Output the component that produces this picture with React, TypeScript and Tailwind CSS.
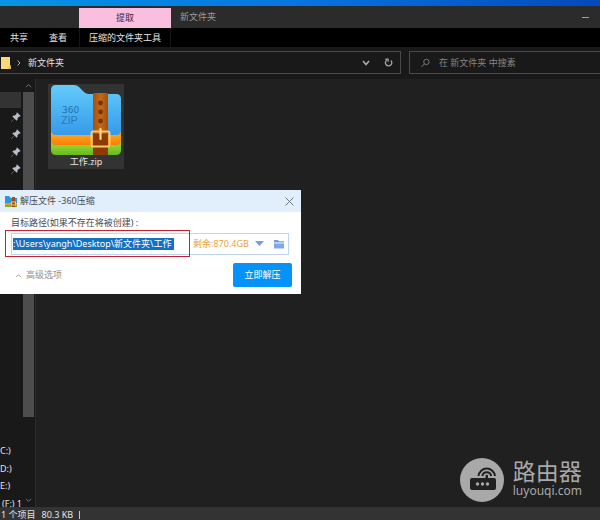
import React from "react";

const PINS = ["desktop", "downloads", "documents", "pictures"];
const DRIVES = ["C:)", "D:)", "E:)", "= (F:) 1"];

function PinIcon() {
  return (
    <svg className="h-[10px] w-[10px]" viewBox="0 0 16 16" aria-hidden="true">
      <path d="M9.5 0.5 L15.5 6.5 L13.6 7.4 L13 7.2 L10.4 9.8 L10.4 12.4 L9 13.8 L5.6 10.4 L1 15.6 L0.4 15 L5.4 10.3 L2.2 7 L3.6 5.6 L6.2 5.6 L8.8 3 L8.6 2.4 Z" fill="#b4bfcb" />
    </svg>
  );
}

function Chevron({ className, d }: { className: string; d: string }) {
  return (
    <svg className={className} viewBox="0 0 8 6" fill="none" stroke="currentColor" aria-hidden="true">
      <path d={d} />
    </svg>
  );
}

function ZipIcon() {
  return (
    <svg className="block h-[72px] w-[72px]" viewBox="0 0 72 72" aria-hidden="true">
      <defs>
        <linearGradient id="folder" x1="0" y1="0" x2="0" y2="1">
          <stop offset="0" stopColor="#63ccfa" />
          <stop offset="1" stopColor="#369aea" />
        </linearGradient>
        <linearGradient id="orange" x1="0" y1="0" x2="0" y2="1">
          <stop offset="0.5" stopColor="#ffa21a" />
          <stop offset="1" stopColor="#f97c08" />
        </linearGradient>
        <linearGradient id="green" x1="0" y1="0" x2="0" y2="1">
          <stop offset="0.6" stopColor="#8ed32c" />
          <stop offset="1" stopColor="#65bb1d" />
        </linearGradient>
        <linearGradient id="belt" x1="0" y1="0" x2="1" y2="0">
          <stop offset="0" stopColor="#a94f08" />
          <stop offset="0.5" stopColor="#c46a17" />
          <stop offset="1" stopColor="#a84c06" />
        </linearGradient>
      </defs>
      <path d="M1 48 H71 V66 Q71 71 66 71 H6 Q1 71 1 66 Z" fill="url(#green)" />
      <path d="M1 42 H71 V56 Q71 61 66 61 H6 Q1 61 1 56 Z" fill="url(#orange)" />
      <path d="M1 6 Q1 1 6 1 H24 Q27 1 29 3 L34 8 Q36 10 39 10 H66 Q71 10 71 15 V46 Q71 51 66 51 H6 Q1 51 1 46 Z" fill="url(#folder)" />
      <text x="12" y="29" fill="#236fae" fontSize="9" fontFamily="'DejaVu Sans', sans-serif">360</text>
      <text x="11" y="40" fill="#2c7abb" fontSize="11" fontFamily="Roboto, sans-serif">ZIP</text>
      <rect x="43" y="9" width="15" height="62" rx="1" fill="url(#belt)" />
      <rect x="43" y="50" width="15" height="21" fill="#8d3b04" />
      <circle cx="50.5" cy="19" r="2.4" fill="#743203" />
      <circle cx="50.5" cy="28" r="2.4" fill="#743203" />
      <circle cx="50.5" cy="37" r="2.4" fill="#743203" />
      <rect x="41.5" y="47.5" width="18" height="15" rx="1.5" fill="none" stroke="#fcc96a" strokeWidth="2" />
      <path d="M50.5 45 V55" stroke="#ffd681" strokeWidth="2.2" strokeLinecap="round" />
    </svg>
  );
}

function SmallZipIcon() {
  return (
    <svg className="h-3 w-3" viewBox="0 0 12 12" aria-hidden="true">
      <path d="M0 1 H4 L6 3 H12 V8 H0 Z" fill="#2f95dc" />
      <path d="M0 8 H12 V10 H0 Z" fill="#f39a1e" />
      <path d="M0 10 H12 V12 H0 Z" fill="#6fb52a" />
      <path d="M7 2 H10 V12 H7 Z" fill="#99501a" />
      <rect x="6.5" y="7" width="4" height="3" fill="none" stroke="#f8c968" />
    </svg>
  );
}

function ExtractDialog() {
  return (
    <section role="dialog" aria-labelledby="dialog-title" className="absolute left-0 top-[190px] w-[301px] bg-white pb-[7px] text-[#4a4a4a]">
      <header className="flex h-[22px] items-center bg-[#e1eefc] pl-[5px] pr-[7px]">
        <SmallZipIcon />
        <h1 id="dialog-title" className="ml-[3px] text-[9px]">解压文件 -360压缩</h1>
        <button type="button" aria-label="关闭" className="ml-auto">
          <svg className="h-[9px] w-[9px]" viewBox="0 0 9 9" stroke="#6f7780" aria-hidden="true">
            <path d="M0.5 0.5 L8.5 8.5 M8.5 0.5 L0.5 8.5" />
          </svg>
        </button>
      </header>
      <label htmlFor="target" className="block px-[11px] pt-1 text-[9px] leading-[14px]">目标路径(如果不存在将被创建) :</label>
      <div className="flex h-[27px] items-center pl-[5px] pr-3">
        <div className="flex h-[27px] w-[185px] shrink-0 items-center border border-[#c4202e] pl-[5px]">
          <div className="flex h-[22px] w-full items-center border-y border-l border-[#bfd5f2] pl-px">
            <input id="target" defaultValue=":\Users\yangh\Desktop\新文件夹\工作" className="h-3 w-[161px] bg-[#1271c4] text-[9px] leading-3 text-white outline-none" />
          </div>
        </div>
        <div className="flex h-[22px] flex-1 items-center border-y border-r border-[#bfd5f2] pl-[3px] pr-1">
          <span className="whitespace-nowrap text-[9px] text-[#e8a33b]">剩余:870.4GB</span>
          <button type="button" aria-label="选择路径" className="ml-auto">
            <svg className="h-[5px] w-[9px]" viewBox="0 0 9 5" aria-hidden="true"><path d="M0 0 H9 L4.5 5 Z" fill="#6d9fe6" /></svg>
          </button>
          <button type="button" aria-label="浏览文件夹" className="ml-[10px]">
            <svg className="h-[10px] w-[10px]" viewBox="0 0 10 10" aria-hidden="true">
              <path d="M0 1 H4 L5 2.2 H10 V3.6 H0 Z" fill="#6f9fdf" />
              <path d="M0 4.4 H10 V9.5 H0 Z" fill="#7fa9e4" />
            </svg>
          </button>
        </div>
      </div>
      <div className="mt-[6px] flex h-6 items-center justify-between pl-[15px] pr-[9px]">
        <button type="button" className="flex items-center gap-1 text-[9px] text-[#8f8f8f]">
          <Chevron className="h-[5px] w-[7px]" d="M1 5 L4 2 L7 5" />
          高级选项
        </button>
        <button type="button" className="h-6 w-[59px] rounded-[2px] bg-[#0593fb] text-[9px] text-white">立即解压</button>
      </div>
    </section>
  );
}

function Watermark() {
  return (
    <div className="absolute bottom-[18px] right-[18px] flex items-center gap-[9px] text-[#a9a9a9]">
      <svg className="h-11 w-11" viewBox="0 0 44 44" aria-hidden="true">
        <circle cx="22" cy="22" r="22" fill="#a9a9a9" />
        <rect x="10" y="20" width="26" height="12" rx="2" fill="#212121" />
        <g fill="#a9a9a9">
          <circle cx="17.5" cy="26" r="1.7" />
          <circle cx="22.5" cy="26" r="1.7" />
          <circle cx="27.5" cy="26" r="1.7" />
        </g>
        <g fill="none" stroke="#212121" strokeWidth="2">
          <path d="M18.5 18 A8.3 8.3 0 0 1 35 18" />
          <path d="M22.3 18 A4.5 4.5 0 0 1 31.2 18" />
        </g>
        <path d="M25.5 21 V18 A1.2 1.2 0 0 1 28 18 V21 Z" fill="#212121" />
      </svg>
      <div className="pb-1">
        <div className="text-[23px] leading-[26px]">路由器</div>
        <div className="text-[12px] leading-[14px]">luyouqi.com</div>
      </div>
    </div>
  );
}

export default function App() {
  return (
    <main className="relative flex min-h-screen flex-col overflow-hidden bg-[#191919] font-['Noto_Sans','Noto_Sans_CJK_SC',sans-serif] text-[9px] text-[#e4e4e4]">
      <div className="h-[6px] bg-linear-to-r from-[#0994e4] via-[#0874e2] to-[#0549bd]" />

      <header className="grid grid-cols-[79px_92px_1fr] bg-[#2b2b2b]">
        <div />
        <button type="button" className="mt-[2px] h-5 bg-[#fabfde] text-[#3a2531]">提取</button>
        <div className="flex h-[22px] items-center justify-between pl-[9px] pr-[11px] text-[#9c9c9c]">
          <span>新文件夹</span>
          <button type="button" aria-label="最小化" className="flex h-3 items-center"><span className="h-px w-[7px] bg-[#a0a0a0]" /></button>
        </div>
      </header>

      <nav className="grid h-[19px] grid-cols-[79px_92px_1fr] bg-black">
        <div className="flex items-center gap-[21px] pl-[10px]">
          <button type="button">共享</button>
          <button type="button">查看</button>
        </div>
        <button type="button" className="border-x border-[#171717] whitespace-nowrap">压缩的文件夹工具</button>
      </nav>

      <div className="flex h-8 items-start gap-2 pt-1">
        <div className="flex h-[23px] w-[401px] items-center border-y border-r border-[#4a4a4a] pl-px pr-[7px]">
          <svg className="h-3 w-[10px]" viewBox="0 0 10 12" aria-hidden="true">
            <path d="M0 0 H9 V8 L10 9 V12 H0 Z" fill="#fbd976" />
            <path d="M8 9 H10 V12 H7 Z" fill="#e9bd51" />
          </svg>
          <svg className="ml-[6px] h-[6px] w-1" viewBox="0 0 4 6" fill="none" stroke="#b5b5b5" aria-hidden="true"><path d="M0.5 0.5 L3 3 L0.5 5.5" /></svg>
          <button type="button" className="ml-[7px]">新文件夹</button>
          <button type="button" aria-label="历史记录" className="ml-auto text-[#b0b0b0]">
            <Chevron className="h-[6px] w-2 stroke-[1.5]" d="M1 1 L4 4.5 L7 1" />
          </button>
          <button type="button" aria-label="刷新" className="ml-[14px]">
            <svg className="h-[9px] w-[9px]" viewBox="0 0 9 9" fill="none" stroke="#a0a0a0" strokeWidth="1.4" aria-hidden="true">
              <path d="M6.8 2.4 A3.2 3.2 0 1 1 2.6 2.2 M1.4 1.2 H4 V3.8" />
            </svg>
          </button>
        </div>
        <label className="flex h-[23px] flex-1 items-center border-y border-l border-[#4a4a4a] pl-[11px]">
          <svg className="h-[10px] w-[10px]" viewBox="0 0 10 10" fill="none" stroke="#808080" aria-hidden="true">
            <circle cx="6" cy="3.8" r="3" />
            <path d="M3.8 6 L0.5 9.4" />
          </svg>
          <input type="search" aria-label="搜索" placeholder="在 新文件夹 中搜素" className="ml-[9px] w-full bg-transparent text-[9px] outline-none placeholder:text-[#858585]" />
        </label>
      </div>

      <div className="flex flex-1">
        <aside className="flex w-[22px] flex-col overflow-hidden pt-[13px]">
          <div className="mr-px h-4 bg-[#333333]" />
          <ul className="grid h-[70px] grid-rows-4 pl-[11px]">
            {PINS.map((p) => (
              <li key={p} className="flex items-center"><PinIcon /></li>
            ))}
          </ul>
          <ul className="-mb-[5px] mt-auto grid h-[70px] grid-cols-[22px] grid-rows-4">
            {DRIVES.map((d) => (
              <li key={d} className={d.length > 3 ? "flex items-center justify-end whitespace-nowrap" : "flex items-center whitespace-nowrap"}>{d}</li>
            ))}
          </ul>
        </aside>
        <div className="flex w-[14px] flex-col items-center border-r border-[#2b2b2b] pr-px text-[#8a8a8a]">
          <Chevron className="my-1 h-[5px] w-[7px]" d="M1 5 L4 2 L7 5" />
          <div className="h-[325px] w-[11px] bg-[#4d4d4d]" />
          <Chevron className="mb-1 mt-auto h-[5px] w-[7px]" d="M1 1 L4 4 L7 1" />
        </div>
        <div className="flex-1 bg-[#202020] pl-3 pt-[5px]">
          <button type="button" className="flex h-[85px] w-[76px] flex-col items-center bg-[#333333]">
            <ZipIcon />
            <span className="leading-3">工作.zip</span>
          </button>
        </div>
      </div>

      <footer className="flex h-[13px] items-center gap-[6px] bg-[#333333] pl-px pt-[3px] leading-[10px]">
        <span>1 个项目</span>
        <span>80.3 KB</span>
        <span className="h-2 w-px bg-[#c8c8c8]" />
      </footer>

      <ExtractDialog />
      <Watermark />
    </main>
  );
}
